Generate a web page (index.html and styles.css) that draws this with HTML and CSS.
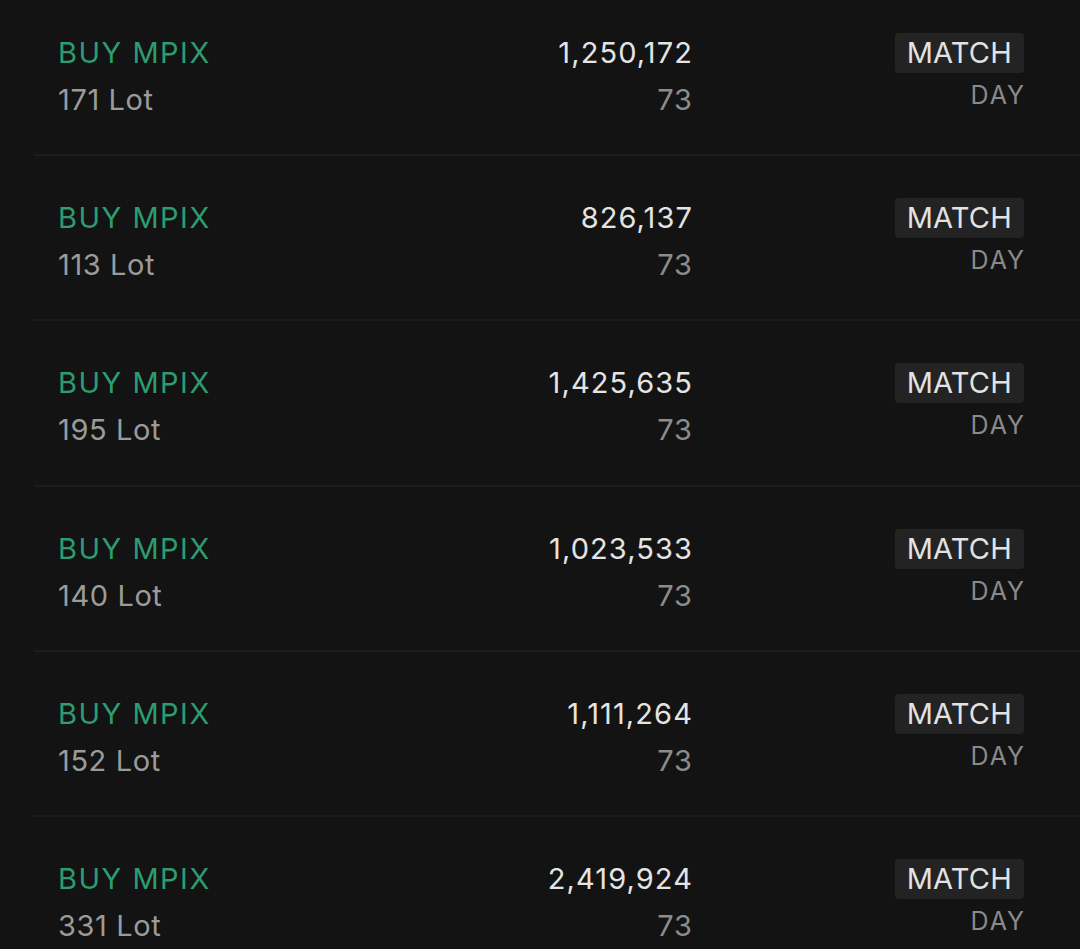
FILE: index.html
```html
<!DOCTYPE html>
<html lang="en">
<head>
<meta charset="utf-8">
<title>Orders</title>
<link rel="stylesheet" href="styles.css">
</head>
<body>
<div class="list">
  <div class="row">
    <div class="col left"><div class="side">BUY MPIX</div><div class="sub">171 Lot</div></div>
    <div class="col mid"><div class="amount">1,250,172</div><div class="price">73</div></div>
    <div class="col right"><div class="badge">MATCH</div><div class="tif">DAY</div></div>
  </div>
  <div class="row">
    <div class="col left"><div class="side">BUY MPIX</div><div class="sub">113 Lot</div></div>
    <div class="col mid"><div class="amount">826,137</div><div class="price">73</div></div>
    <div class="col right"><div class="badge">MATCH</div><div class="tif">DAY</div></div>
  </div>
  <div class="row">
    <div class="col left"><div class="side">BUY MPIX</div><div class="sub">195 Lot</div></div>
    <div class="col mid"><div class="amount">1,425,635</div><div class="price">73</div></div>
    <div class="col right"><div class="badge">MATCH</div><div class="tif">DAY</div></div>
  </div>
  <div class="row">
    <div class="col left"><div class="side">BUY MPIX</div><div class="sub">140 Lot</div></div>
    <div class="col mid"><div class="amount">1,023,533</div><div class="price">73</div></div>
    <div class="col right"><div class="badge">MATCH</div><div class="tif">DAY</div></div>
  </div>
  <div class="row">
    <div class="col left"><div class="side">BUY MPIX</div><div class="sub">152 Lot</div></div>
    <div class="col mid"><div class="amount">1,111,264</div><div class="price">73</div></div>
    <div class="col right"><div class="badge">MATCH</div><div class="tif">DAY</div></div>
  </div>
  <div class="row">
    <div class="col left"><div class="side">BUY MPIX</div><div class="sub">331 Lot</div></div>
    <div class="col mid"><div class="amount">2,419,924</div><div class="price">73</div></div>
    <div class="col right"><div class="badge">MATCH</div><div class="tif">DAY</div></div>
  </div>
</div>
</body>
</html>
```
FILE: styles.css
```css
html, body {
  margin: 0;
  padding: 0;
  background: #131313;
  height: 100%;
  overflow: hidden;
}
body {
  font-family: Inter, Lato, sans-serif;
  -webkit-font-smoothing: antialiased;
}
.list {
  margin-top: -9px;
  margin-left: 34px;
}
.row {
  box-sizing: border-box;
  height: 165.2px;
  border-bottom: 2px solid #1c1c1c;
  padding: 38px 56px 0 24px;
  display: grid;
  grid-template-columns: 1fr 300px 332px;
  align-items: start;
}
.col {
  display: flex;
  flex-direction: column;
}
.left { align-items: flex-start; }
.mid, .right { align-items: flex-end; }
.side, .sub, .amount, .price {
  font-size: 29px;
  line-height: 47px;
}
.side { color: #2d9c70; letter-spacing: 1.5px; }
.sub { color: #9b9b9b; letter-spacing: 0.6px; }
.amount { color: #e4e4e4; letter-spacing: 1.1px; margin-right: -1px; }
.price { color: #8c8c8c; letter-spacing: 1px; margin-right: -1px; }
.badge {
  margin-top: 4px;
  height: 40px;
  line-height: 40px;
  font-size: 29px;
  padding: 0 12px;
  border-radius: 4px;
  background: #232323;
  color: #e2e2e2;
  letter-spacing: 0.2px;
}
.tif {
  margin-top: 5px;
  margin-right: -2px;
  font-size: 25px;
  line-height: 34px;
  letter-spacing: 2px;
  color: #8a8a8a;
}
```
